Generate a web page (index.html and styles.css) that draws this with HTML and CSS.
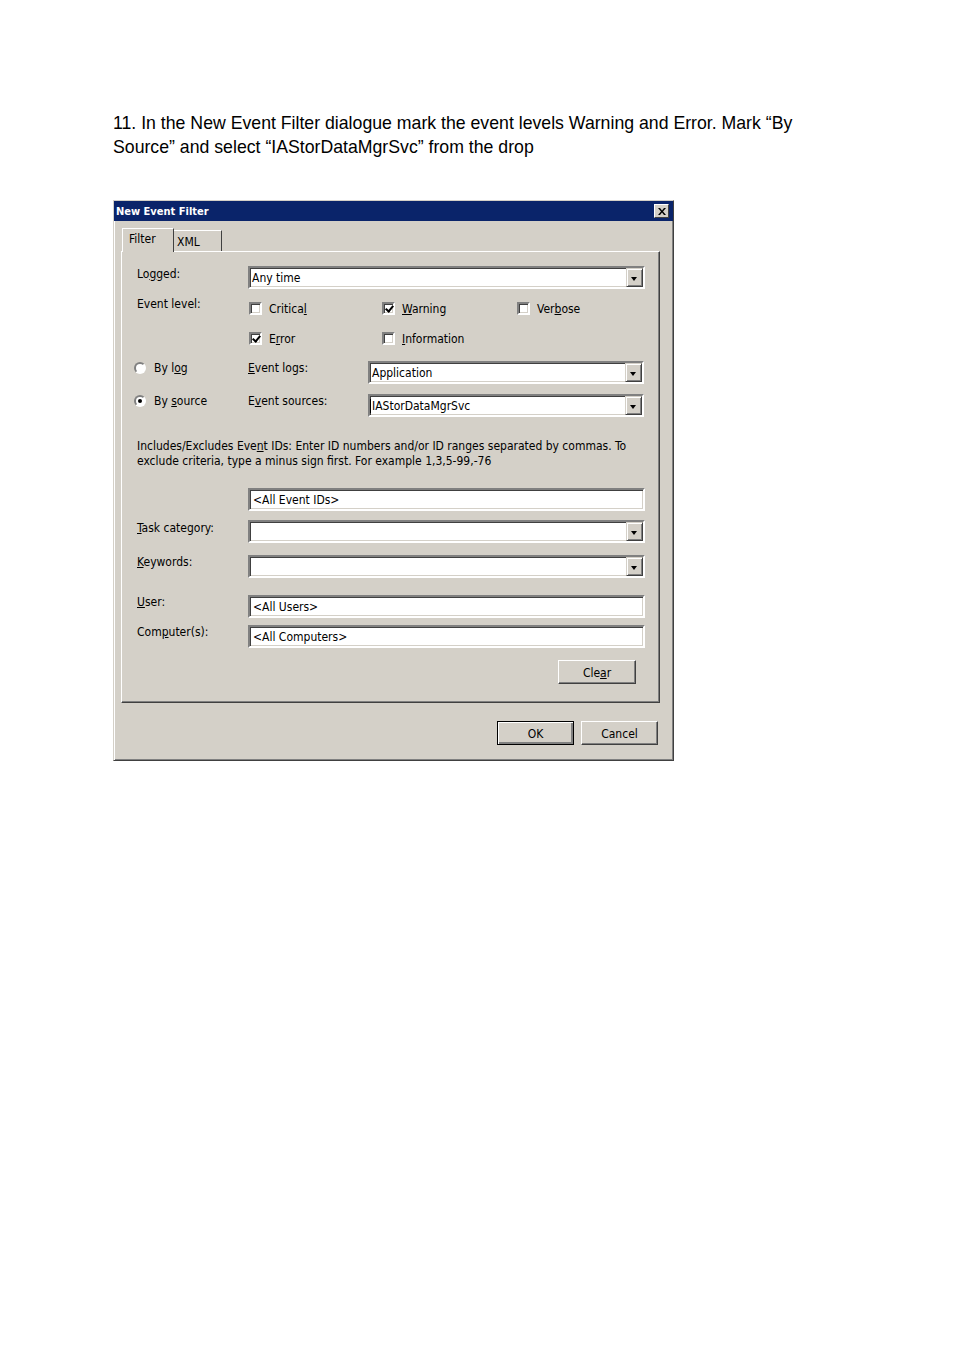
FILE: index.html
```html
<!DOCTYPE html>
<html lang="en">
<head>
    <meta charset="UTF-8">
    <title>New Event Filter</title>
    <link rel="stylesheet" href="styles.css">
</head>
<body>

    <p class="intro">11. In the New Event Filter dialogue mark the event levels Warning and Error. Mark “By<br>Source” and select “IAStorDataMgrSvc” from the drop</p>

    <div class="dialog">
        <div class="titlebar">
            <span class="title">New Event Filter</span>
            <span class="close">
                <svg width="8" height="7" viewBox="0 0 8 7"><path d="M0 0h2l2 2.5L6 0h2L5 3.5 8 7H6L4 4.5 2 7H0l3-3.5z" fill="#000"/></svg>
            </span>
        </div>

        <div class="body">
            <div class="tabs">
                <div class="tab active">Filter</div>
                <div class="tab">XML</div>
            </div>

            <div class="panel">
                <div class="row r-logged">
                    <span class="lbl">Lo<u>g</u>ged:</span>
                    <div class="combo"><span class="val">Any time</span><span class="drop"></span></div>
                </div>

                <div class="row r-level1">
                    <span class="lbl">Event level:</span>
                    <div class="checks">
                        <span class="chk"><span class="box"></span><span>Critica<u>l</u></span></span>
                        <span class="chk"><span class="box checked"></span><span><u>W</u>arning</span></span>
                        <span class="chk"><span class="box"></span><span>Ver<u>b</u>ose</span></span>
                    </div>
                </div>

                <div class="row r-level2">
                    <span class="lbl"></span>
                    <div class="checks">
                        <span class="chk"><span class="box checked"></span><span>E<u>r</u>ror</span></span>
                        <span class="chk"><span class="box"></span><span><u>I</u>nformation</span></span>
                    </div>
                </div>

                <div class="row r-bylog">
                    <span class="opt"><span class="radio"></span><span>By l<u>o</u>g</span></span>
                    <span class="lbl2"><u>E</u>vent logs:</span>
                    <div class="combo"><span class="val">Application</span><span class="drop"></span></div>
                </div>

                <div class="row r-bysource">
                    <span class="opt"><span class="radio on"></span><span>By <u>s</u>ource</span></span>
                    <span class="lbl2">E<u>v</u>ent sources:</span>
                    <div class="combo"><span class="val caret">IAStorDataMgrSvc</span><span class="drop"></span></div>
                </div>

                <p class="desc">Includes/Excludes Eve<u>n</u>t IDs: Enter ID numbers and/or ID ranges separated by commas. To<br>exclude criteria, type a minus sign first. For example 1,3,5-99,-76</p>

                <div class="row r-ids">
                    <span class="lbl"></span>
                    <div class="field">&lt;All Event IDs&gt;</div>
                </div>

                <div class="row r-task">
                    <span class="lbl"><u>T</u>ask category:</span>
                    <div class="combo"><span class="val"></span><span class="drop"></span></div>
                </div>

                <div class="row r-keywords">
                    <span class="lbl"><u>K</u>eywords:</span>
                    <div class="combo"><span class="val"></span><span class="drop"></span></div>
                </div>

                <div class="row r-user">
                    <span class="lbl"><u>U</u>ser:</span>
                    <div class="field">&lt;All Users&gt;</div>
                </div>

                <div class="row r-computer">
                    <span class="lbl">Com<u>p</u>uter(s):</span>
                    <div class="field">&lt;All Computers&gt;</div>
                </div>

                <div class="clear-row">
                    <button class="btn clear">Cle<u>a</u>r</button>
                </div>
            </div>

            <div class="actions">
                <button class="btn default">OK</button>
                <button class="btn">Cancel</button>
            </div>
        </div>
    </div>

</body>
</html>
```

FILE: styles.css
```css
* {
    box-sizing: border-box;
}
body {
    margin: 0;
    padding: 0 0 0 113px;
    background-color: #fff;
    font-family: "Liberation Sans", Arial, sans-serif;
}
.intro {
    margin: 111px 0 41px 0;
    font-size: 17.7px;
    line-height: 24px;
    color: #000;
}
.dialog {
    width: 561px;
    height: 561px;
    background-color: #d4d0c8;
    border: 1px solid;
    border-color: #d4d0c8 #404040 #404040 #d4d0c8;
    box-shadow: inset 1px 1px #fff, inset -1px -1px #808080;
    font-family: "DejaVu Sans", sans-serif;
    font-stretch: condensed;
    font-size: 12px;
    color: #000;
}
.titlebar {
    height: 20px;
    background-color: #0a246a;
    display: flex;
    align-items: center;
    justify-content: space-between;
    padding: 0 4px 0 2px;
}
.title {
    color: #fff;
    font-weight: bold;
    font-size: 11px;
}
.close {
    width: 15px;
    height: 14px;
    background-color: #d4d0c8;
    border: 1px solid;
    border-color: #fff #404040 #404040 #fff;
    display: flex;
    align-items: center;
    justify-content: center;
}
.body {
    padding: 7px 13px 15px 7px;
}
.tabs {
    display: flex;
    align-items: flex-end;
    height: 23px;
    padding-left: 1px;
}
.tab {
    width: 48px;
    height: 21px;
    padding: 3px 0 0 3px;
    border: 1px solid;
    border-bottom: none;
    border-left: none;
    border-color: #fff #404040 transparent #fff;
    line-height: 16px;
    position: relative;
}
.tab.active {
    width: 52px;
    height: 24px;
    padding: 2px 0 0 6px;
    border-left: 1px solid #fff;
    background-color: #d4d0c8;
    margin-bottom: -1px;
    z-index: 1;
}
.panel {
    width: 539px;
    border: 1px solid;
    border-color: #fff #404040 #404040 #fff;
    box-shadow: inset -1px -1px #808080;
    padding: 0 14px 18px 15px;
}
.row {
    display: flex;
    align-items: flex-start;
}
.lbl {
    width: 111px;
    flex: none;
    line-height: 14px;
}
.r-logged { margin-top: 14px; }
.r-logged .lbl { padding-top: 1px; }
.r-level1 { margin-top: 8px; }
.r-level2 { margin-top: 8px; }
.r-bylog { margin-top: 12px; }
.r-bysource { margin-top: 10px; }
.r-ids { margin-top: 0; }
.r-task { margin-top: 9px; }
.r-keywords { margin-top: 12px; }
.r-user { margin-top: 17px; }
.r-computer { margin-top: 7px; }

.r-task .lbl {
    padding-top: 1px;
}
.checks {
    display: flex;
    align-items: center;
    height: 22px;
    padding-left: 1px;
}
.chk {
    display: flex;
    align-items: center;
    width: 133px;
    line-height: 14px;
}
.chk + .chk {
    width: 135px;
}
.chk span:last-child {
    padding-top: 2px;
}
.box {
    width: 13px;
    height: 13px;
    background-color: #fff;
    border: 2px solid;
    border-color: #808080 #fff #fff #808080;
    box-shadow: inset 1px 1px #404040, inset -1px -1px #d4d0c8;
    margin-right: 7px;
    position: relative;
    flex: none;
}
.box.checked::after {
    content: "";
    position: absolute;
    left: 3px;
    top: 0;
    width: 3px;
    height: 6px;
    border: solid #000;
    border-width: 0 2px 2px 0;
    transform: rotate(40deg);
}
.opt {
    display: flex;
    align-items: center;
    width: 114px;
    margin-left: -3px;
    flex: none;
    line-height: 14px;
    height: 14px;
}
.radio {
    width: 12px;
    height: 12px;
    border-radius: 50%;
    border: 2px solid;
    border-color: #808080 #fff #fff #808080;
    background-color: #fff;
    margin-right: 8px;
    position: relative;
    flex: none;
}
.radio.on::after {
    content: "";
    position: absolute;
    left: 2px;
    top: 2px;
    width: 4px;
    height: 4px;
    border-radius: 50%;
    background-color: #000;
}
.lbl2 {
    width: 120px;
    flex: none;
    line-height: 14px;
}
.combo, .field {
    flex: 1;
    height: 23px;
    background-color: #fff;
    border: 2px solid;
    border-color: #808080 #fff #fff #808080;
    box-shadow: inset 1px 1px #404040, inset -1px -1px #d4d0c8;
    display: flex;
    align-items: center;
    justify-content: space-between;
}
.r-bylog .combo, .r-bysource .combo {
    margin-right: 1px;
}
.field {
    padding-left: 3px;
}
.val {
    padding-left: 2px;
}
.val.caret {
    border-left: 1px solid #000;
    padding-left: 1px;
    margin-left: 0;
}
.drop {
    width: 17px;
    height: 19px;
    background-color: #d4d0c8;
    border: 1px solid;
    border-color: #d4d0c8 #404040 #404040 #d4d0c8;
    box-shadow: inset 1px 1px #fff, inset -1px -1px #808080;
    position: relative;
    flex: none;
}
.drop::after {
    content: "";
    position: absolute;
    left: 4px;
    top: 8px;
    border-style: solid;
    border-width: 4px 3.5px 0 3.5px;
    border-color: #000 transparent transparent transparent;
}
.desc {
    margin: 22px 0 19px 0;
    line-height: 15px;
}
.clear-row {
    display: flex;
    justify-content: flex-end;
    margin-top: 12px;
    padding-right: 9px;
}
.btn {
    width: 77px;
    height: 24px;
    font-family: inherit;
    font-stretch: inherit;
    font-size: 12px;
    color: #000;
    background-color: #d4d0c8;
    border: 1px solid;
    border-color: #fff #404040 #404040 #fff;
    box-shadow: inset -1px -1px #808080;
    padding: 2px 0 0 0;
}
.btn.clear {
    width: 78px;
}
.btn.default {
    border: 1px solid #000;
    box-shadow: inset 1px 1px #fff, inset -2px -2px #808080;
}
.actions {
    display: flex;
    justify-content: flex-end;
    gap: 7px;
    margin-top: 18px;
    padding-right: 2px;
}
```
